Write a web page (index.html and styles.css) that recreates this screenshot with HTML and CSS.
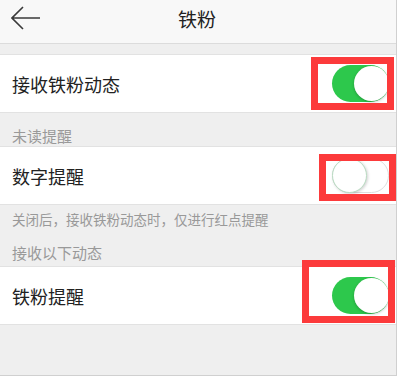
FILE: index.html
```html
<!DOCTYPE html>
<html lang="zh">
<head>
<meta charset="utf-8">
<link rel="stylesheet" href="styles.css">
</head>
<body>
<div class="screen">
  <header class="topbar">
    <svg class="back" width="30" height="26" viewBox="0 0 30 26"><path d="M12 2 L1 13 L12 24 M1 13 H29" fill="none" stroke="#3a3a3a" stroke-width="1.6"/></svg>
    <div class="title">铁粉</div>
  </header>
  <div class="gap"></div>
  <div class="row row-first">
    <span class="label">接收铁粉动态</span>
    <span class="toggle on"><span class="knob"></span></span>
  </div>
  <div class="section s1">未读提醒</div>
  <div class="row">
    <span class="label">数字提醒</span>
    <span class="toggle off"><span class="knob"></span></span>
  </div>
  <div class="note">关闭后，接收铁粉动态时，仅进行红点提醒</div>
  <div class="section s2">接收以下动态</div>
  <div class="row">
    <span class="label">铁粉提醒</span>
    <span class="toggle on"><span class="knob"></span></span>
  </div>
  <div class="rest"></div>

  <div class="mark m1"></div>
  <div class="mark m2"></div>
  <div class="mark m3"></div>
</div>
</body>
</html>
```
FILE: styles.css
```css
* { box-sizing: border-box; }
html, body { margin: 0; padding: 0; background: #fff; }
body { font-family: "Noto Sans CJK SC", "Noto Sans", sans-serif; }
.screen {
  position: relative;
  width: 397px;
  height: 376px;
  background: #efefef;
  border-right: 1px solid #d0d0d0;
  border-bottom: 1px solid #d0d0d0;
  overflow: hidden;
  display: flex;
  flex-direction: column;
}
.topbar {
  position: relative;
  height: 44px;
  flex: none;
  background: #f8f8f8;
  border-bottom: 1px solid #dcdcdc;
  display: flex;
  align-items: center;
  justify-content: center;
}
.back { position: absolute; left: 11px; top: 5px; }
.title { font-size: 19px; color: #222; line-height: 26px; margin-top: -6px; margin-left: -2px; }
.gap { height: 10px; flex: none; }
.row {
  flex: none;
  height: 59px;
  background: #fff;
  border-top: 1px solid #e2e2e2;
  border-bottom: 1px solid #e2e2e2;
  display: flex;
  align-items: center;
  justify-content: space-between;
  padding: 0 7px 0 12px;
}
.row-first { height: 59px; }
.label { font-size: 18px; color: #222; line-height: 24px; }
.section {
  flex: none;
  font-size: 15px;
  color: #999;
  line-height: 20px;
  padding-left: 12px;
  display: flex;
  align-items: flex-end;
}
.s1 { height: 34px; padding-bottom: 0; margin-top: -1px; }
.s2 { height: 34px; padding-bottom: 4px; margin-bottom: -1px; }
.note {
  flex: none;
  height: 29px;
  font-size: 13.5px;
  color: #999;
  line-height: 18px;
  padding: 6px 0 0 12px;
  margin-top: -1px;
}
.rest { flex: 1; }
.toggle {
  position: relative;
  width: 57px;
  height: 37px;
  border-radius: 19px;
  flex: none;
}
.toggle.on { background: #2dc84c; }
.toggle.off { background: #fff; border: 1px solid #dedede; height: 35px; }
.knob {
  position: absolute;
  top: 1px;
  width: 35px;
  height: 35px;
  border-radius: 50%;
  background: #fff;
  box-shadow: 0 1px 3px rgba(0,0,0,0.25);
}
.toggle.on .knob { right: 0; }
.toggle.off .knob { left: -1px; top: -1px; border: 1px solid #b9dcc2; box-shadow: 1px 1px 3px rgba(0,0,0,0.18); }
.mark {
  position: absolute;
  border: 7px solid #fc3a3b;
}
.m1 { left: 311px; top: 57px; width: 83px; height: 53px; }
.m2 { left: 319px; top: 154px; width: 77px; height: 47px; }
.m3 { left: 302px; top: 260px; width: 93px; height: 63px; }
```
